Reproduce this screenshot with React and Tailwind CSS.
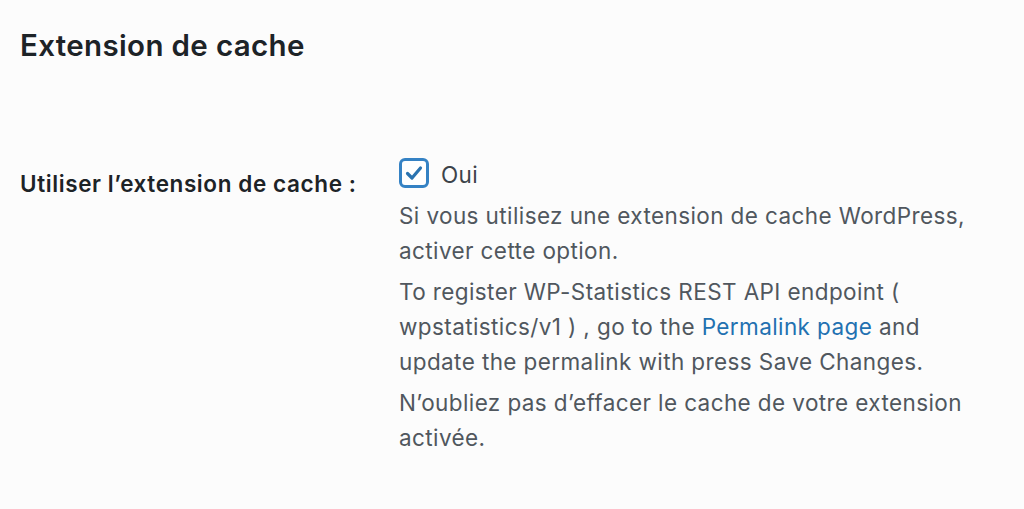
export default function App() {
  return (
    <div className="w-[1024px] h-[509px] bg-[#fcfcfc] overflow-hidden" style={{ fontFamily: 'Inter, "Noto Sans", sans-serif' }}>
      <div className="pl-[20px] pt-[27px]">
        <h2 className="text-[29.5px] leading-[36px] font-semibold text-[#1d2327] tracking-[0.35px]">Extension de cache</h2>
      </div>
      <div className="flex mt-[94px] pl-[20px]">
        <div className="w-[379px] shrink-0 pt-[12px] text-[22.5px] leading-[30px] font-semibold text-[#1d2327] tracking-[0.6px]">
          Utiliser l’extension de cache :
        </div>
        <div className="flex flex-col text-[22.5px] text-[#50575e] tracking-[0.4px]">
          <label className="flex items-center gap-[12px] h-[32px]">
            <span className="w-[30px] h-[30px] rounded-[6px] border-[3px] border-[#3582c4] bg-white flex items-center justify-center">
              <svg width="20" height="20" viewBox="0 0 20 20" fill="none">
                <path d="M3.5 10.5 L8 15 L16.5 5" stroke="#2a73b0" strokeWidth="3.2" strokeLinecap="round" strokeLinejoin="round" />
              </svg>
            </span>
            <span className="text-[#3c434a] pt-[4px]">Oui</span>
          </label>
          <p className="leading-[35px] mt-[9px]">
            Si vous utilisez une extension de cache WordPress,<br />activer cette option.
          </p>
          <p className="leading-[35px] mt-[6px]">
            To register WP-Statistics REST API endpoint (<br />wpstatistics/v1 ) , go to the <a className="text-[#2271b1]">Permalink page</a> and<br />update the permalink with press Save Changes.
          </p>
          <p className="leading-[35px] mt-[6px]">
            N’oubliez pas d’effacer le cache de votre extension<br />activée.
          </p>
        </div>
      </div>
    </div>
  );
}
